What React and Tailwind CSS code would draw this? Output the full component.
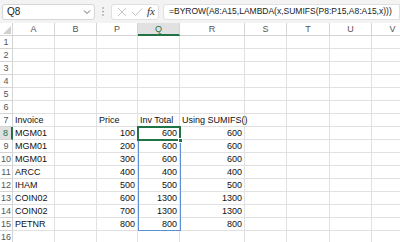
import React from "react";

const cols = ["A", "B", "P", "Q", "R", "S", "T", "U", "V"];
const data = {
  7: ["Invoice", "", "Price", "Inv Total", "Using SUMIFS()"],
  8: ["MGM01", "", "100", "600", "600"],
  9: ["MGM01", "", "200", "600", "600"],
  10: ["MGM01", "", "300", "600", "600"],
  11: ["ARCC", "", "400", "400", "400"],
  12: ["IHAM", "", "500", "500", "500"],
  13: ["COIN02", "", "600", "1300", "1300"],
  14: ["COIN02", "", "700", "1300", "1300"],
  15: ["PETNR", "", "800", "800", "800"],
};

export default function App() {
  const rows = Array.from({ length: 16 }, (_, i) => i + 1);
  return (
    <div
      className="w-[400px] h-[242px] overflow-hidden bg-white relative"
      style={{ fontFamily: '"Liberation Sans", Arial, sans-serif' }}
    >
      {/* formula bar */}
      <div className="h-[23px] bg-[#f3f3f3] flex items-center">
        <div className="ml-[2px] w-[93px] h-[16px] bg-white border border-[#d6d6d6] rounded-[3px] flex items-center justify-between pl-[4px] pr-[3px]">
          <span className="text-[10px] text-[#222]">Q8</span>
          <svg width="8" height="6" viewBox="0 0 8 6">
            <path d="M1 1.5 L4 4.5 L7 1.5" fill="none" stroke="#666" strokeWidth="1" />
          </svg>
        </div>
        <div className="w-[16px] flex justify-center">
          <svg width="2" height="9" viewBox="0 0 2 9">
            <circle cx="1" cy="1" r="0.8" fill="#888" />
            <circle cx="1" cy="4.5" r="0.8" fill="#888" />
            <circle cx="1" cy="8" r="0.8" fill="#888" />
          </svg>
        </div>
        <div className="w-[48px] h-[16px] bg-white border border-[#e0e0e0] rounded-[3px] flex items-center">
          <svg width="14" height="10" viewBox="0 0 14 10" className="ml-[3px]">
            <path d="M3 1 L11 9 M11 1 L3 9" stroke="#c8c8c8" strokeWidth="1" fill="none" />
          </svg>
          <svg width="14" height="10" viewBox="0 0 14 10" className="ml-[1px]">
            <path d="M2 5 L5.5 8.5 L12 1.5" stroke="#c8c8c8" strokeWidth="1" fill="none" />
          </svg>
          <span
            className="ml-[3px] text-[11px] italic text-[#333] leading-none"
            style={{ fontFamily: '"Liberation Serif", "Times New Roman", serif' }}
          >
            fx
          </span>
        </div>
        <div className="ml-[4px] flex-1 h-[16px] bg-white border border-[#e0e0e0] rounded-l-[3px] flex items-center pl-[5px] overflow-hidden whitespace-nowrap">
          <span className="text-[8.5px] text-[#222]">
            =BYROW(A8:A15,LAMBDA(x,SUMIFS(P8:P15,A8:A15,x)))
          </span>
        </div>
      </div>

      {/* grid */}
      <div className="relative">
        <div className="grid grid-cols-[13px_42px_42px_41px_42px_65px_42px_43px_42px_42px] auto-rows-[13px] text-[9px] leading-[13px]">
          {/* header row */}
          <div className="border-r border-b border-[#d4d4d4] bg-white relative">
            <svg width="8" height="8" viewBox="0 0 8 8" className="absolute right-[1px] bottom-[1px]">
              <path d="M8 0 L8 8 L0 8 Z" fill="#d0d0d0" />
            </svg>
          </div>
          {cols.map((c) => (
            <div
              key={c}
              className={
                c === "Q"
                  ? "bg-[#e1e1e1] border-r border-[#d4d4d4] border-b-2 border-b-[#217346] text-[#217346] text-center leading-[12px]"
                  : "bg-white border-r border-b border-[#d4d4d4] text-[#555] text-center leading-[12px]"
              }
            >
              {c}
            </div>
          ))}
          {rows.map((r) => {
            const d = data[r] || [];
            return (
              <React.Fragment key={r}>
                <div
                  className={
                    r === 8
                      ? "bg-[#e1e1e1] border-r-2 border-r-[#217346] border-b border-[#d4d4d4] text-[#217346] text-center"
                      : "bg-white border-r border-b border-[#d4d4d4] text-[#555] text-center"
                  }
                >
                  {r}
                </div>
                {cols.map((c, ci) => {
                  const v = d[ci] || "";
                  const isNum = /^\d+$/.test(v);
                  return (
                    <div
                      key={c}
                      className={
                        "border-r border-b border-[#e1e1e1] text-[#111] whitespace-nowrap " +
                        (isNum ? "text-right pr-[2px]" : "pl-[2px]")
                      }
                    >
                      {v}
                    </div>
                  );
                })}
              </React.Fragment>
            );
          })}
        </div>
        {/* spill range border Q8:Q15 */}
        <div className="absolute left-[138px] top-[103px] w-[43px] h-[105px] border border-[#5b8fd6] pointer-events-none" />
        {/* active cell Q8 */}
        <div className="absolute left-[137px] top-[103px] w-[44px] h-[15px] border-2 border-[#217346] pointer-events-none" />
        {/* fill handle */}
        <div className="absolute left-[178px] top-[115px] w-[5px] h-[5px] bg-[#217346] border border-white pointer-events-none" />
      </div>
    </div>
  );
}
